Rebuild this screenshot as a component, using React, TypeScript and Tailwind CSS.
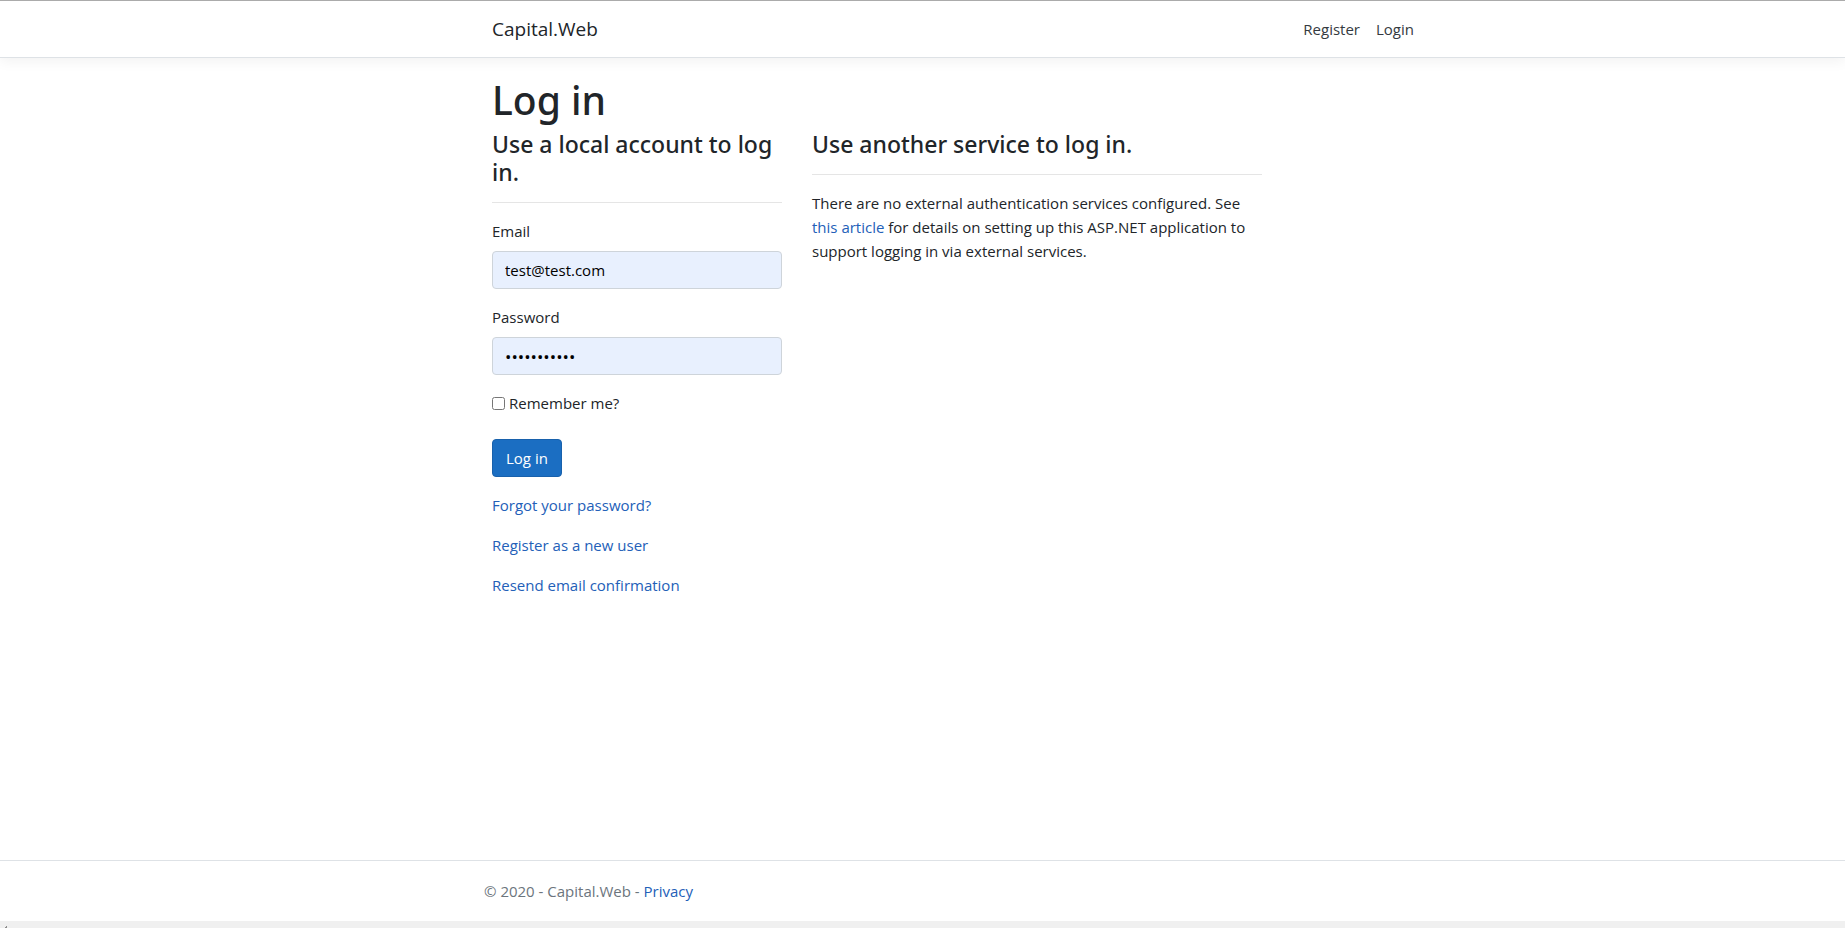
import React from "react";

const link = "text-[#2360b8] hover:underline";
const field =
  "block h-[38px] w-full rounded border border-[#ced4da] bg-[#e8f0fe] px-3 leading-6 text-black outline-none";
const sectionTitle = "font-['Noto_Sans',sans-serif] text-[23px] leading-7 font-medium";
const rule = "my-4 border-[#e5e5e5]";

export default function App() {
  return (
    <div className="flex min-h-screen flex-col overflow-x-hidden bg-white font-['Open_Sans','Noto_Sans',sans-serif] text-[15px] leading-6 text-[#212529]">
      <header className="mb-4 border-t border-b border-t-[#ababab] border-b-[#dee2e6] bg-white pl-[69px] shadow-[0_4px_12px_rgba(0,0,0,0.05)]">
        <nav className="mx-auto flex h-14 max-w-[960px] items-center justify-between px-[15px]">
          <a href="#" className="text-[19px]">Capital.Web</a>
          <ul className="flex">
            <li>
              <a href="#register" className="block px-2 text-[#343a40]">Register</a>
            </li>
            <li>
              <a href="#login" className="block px-2 text-[#343a40]">Login</a>
            </li>
          </ul>
        </nav>
      </header>

      <div className="grow pl-[69px]">
        <main className="mx-auto max-w-[960px] px-[15px]">
          <h1 className="mb-1.5 pt-0.5 font-['Noto_Sans',sans-serif] text-[39px] leading-[48px] font-medium">Log in</h1>
          <div className="grid grid-cols-12 gap-x-[30px]">
            <section className="col-span-4">
              <form onSubmit={(e) => e.preventDefault()}>
                <h2 className={sectionTitle}>Use a local account to log in.</h2>
                <hr className={rule} />
                <div className="mb-4">
                  <label htmlFor="email" className="mb-2 block">Email</label>
                  <input id="email" type="email" defaultValue="test@test.com" className={`${field} text-[15px]`} />
                </div>
                <div className="mb-4">
                  <label htmlFor="password" className="mb-2 block">Password</label>
                  <input
                    id="password"
                    type="password"
                    defaultValue="password123"
                    className={`${field} text-[17px]`}
                  />
                </div>
                <div className="mb-6 flex items-center gap-1">
                  <input id="remember" type="checkbox" className="size-[13px]" />
                  <label htmlFor="remember">Remember me?</label>
                </div>
                <button
                  type="submit"
                  className="mb-4 block h-[38px] rounded border border-[#1861ac] bg-[#1b6ec2] px-[13px] text-white"
                >
                  Log in
                </button>
                <div className="flex flex-col items-start gap-4">
                  <a href="#forgot" className={link}>Forgot your password?</a>
                  <a href="#register" className={link}>Register as a new user</a>
                  <a href="#resend" className={link}>Resend email confirmation</a>
                </div>
              </form>
            </section>
            <section className="col-span-6">
              <h2 className={sectionTitle}>Use another service to log in.</h2>
              <hr className={rule} />
              <p>
                There are no external authentication services configured. See{" "}
                <a href="#article" className={link}>this article</a> for details on setting up this ASP.NET
                application to support logging in via external services.
              </p>
            </section>
          </div>
        </main>
      </div>

      <footer className="border-t border-[#dee2e6] text-[#6c757d]">
        <div className="pl-[69px]">
          <div className="mx-auto max-w-[960px] px-[7px] leading-[60px]">
            © 2020 - Capital.Web - <a href="#privacy" className={link}>Privacy</a>
          </div>
        </div>
        <div className="flex h-[7px] items-end bg-[#f0f0f0] pl-[5px]">
          <svg width="2" height="2" viewBox="0 0 2 2" aria-hidden="true">
            <path d="M2 0v2H0V1h1V0z" fill="#8c8c8c" />
          </svg>
        </div>
      </footer>
    </div>
  );
}
